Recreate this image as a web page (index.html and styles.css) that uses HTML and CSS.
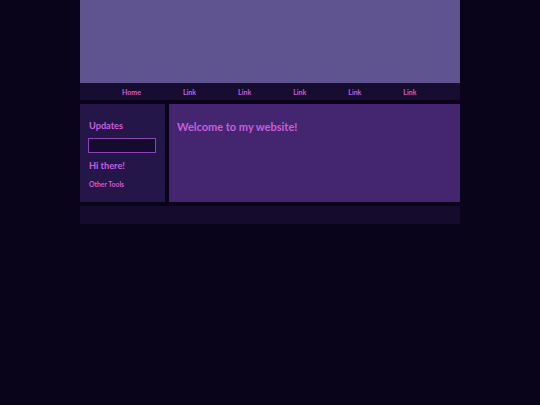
FILE: index.html
```html
<!DOCTYPE html>
<html>
<head>
<meta charset="utf-8">
<link rel="stylesheet" href="styles.css">
</head>
<body>
<div class="page">
  <header class="banner"></header>
  <nav class="nav">
    <a class="nav-link" href="#">Home</a>
    <a class="nav-link" href="#">Link</a>
    <a class="nav-link" href="#">Link</a>
    <a class="nav-link" href="#">Link</a>
    <a class="nav-link" href="#">Link</a>
    <a class="nav-link" href="#">Link</a>
  </nav>
  <div class="content">
    <aside class="sidebar">
      <h3 class="side-title">Updates</h3>
      <input class="side-input" type="text">
      <h3 class="side-title">Hi there!</h3>
      <p class="side-small">Other Tools</p>
    </aside>
    <main class="main">
      <h1 class="main-title">Welcome to my website!</h1>
    </main>
  </div>
  <footer class="footer"></footer>
</div>
</body>
</html>
```
FILE: styles.css
```css
html, body {
  margin: 0;
  padding: 0;
  background: #09041a;
  font-family: "Lato", "Noto Sans", sans-serif;
  color: #c95ddc;
}
.page {
  width: 380px;
  margin: 0 auto;
}
.banner {
  display: block;
  height: 83px;
  background: #5f5490;
}
.nav {
  height: 17px;
  background: #170d30;
  display: flex;
  align-items: center;
  padding-left: 21px;
}
.nav-link {
  color: #c95ddc;
  text-decoration: none;
  font-weight: 700;
  font-size: 7px;
  padding: 0 21px;
}
.content {
  margin-top: 4px;
  display: flex;
  gap: 4px;
  height: 98px;
}
.sidebar {
  width: 85px;
  background: #25164a;
  padding: 16px 9px 0 9px;
  box-sizing: border-box;
}
.side-title {
  margin: 0;
  font-size: 9.2px;
  font-weight: 700;
  line-height: 12px;
}
.side-input {
  display: block;
  box-sizing: border-box;
  width: 68px;
  height: 15px;
  margin: 6px 0 7px -1px;
  background: #150b2e;
  border: 1px solid #8c45b4;
  padding: 0;
  outline: none;
}
.side-small {
  margin: 7px 0 0 0;
  font-size: 6.8px;
  font-weight: 700;
  line-height: 10px;
}
.main {
  flex: 1;
  background: #43266f;
  padding: 15px 8px;
  box-sizing: border-box;
}
.main-title {
  margin: 0;
  font-size: 11px;
  font-weight: 700;
  line-height: 15px;
}
.footer {
  display: block;
  margin-top: 4px;
  height: 18px;
  background: #150b2c;
}
```
